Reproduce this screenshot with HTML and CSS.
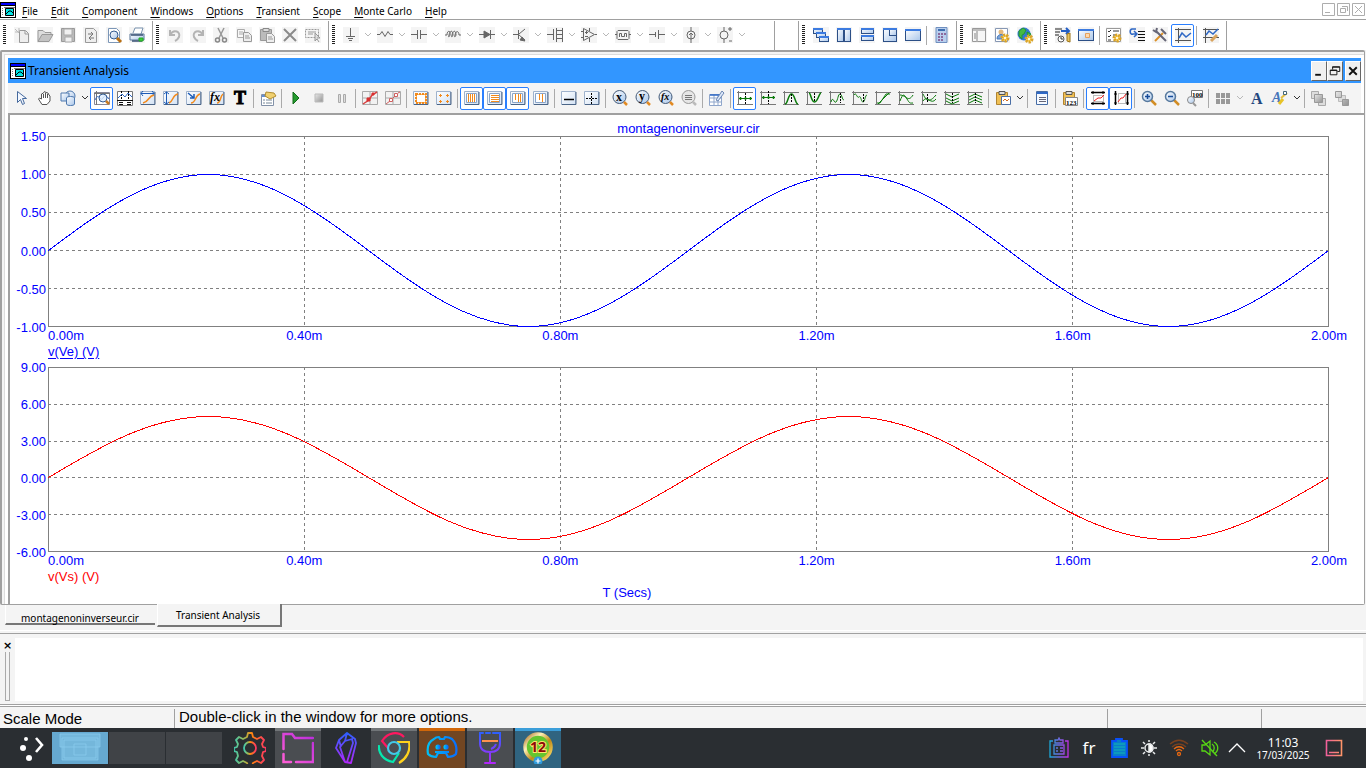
FILE: index.html
```html
<!DOCTYPE html>
<html lang="en">
<head>
<meta charset="utf-8">
<title>Transient Analysis</title>
<link rel="stylesheet" href="styles.css">
</head>
<body>
<nav class="menubar">
  <svg class="app-icon" viewBox="0 0 16 16" aria-hidden="true"><use href="#app"/></svg>
  <button><u>F</u>ile</button><button><u>E</u>dit</button><button><u>C</u>omponent</button><button><u>W</u>indows</button><button><u>O</u>ptions</button><button><u>T</u>ransient</button><button><u>S</u>cope</button><button><u>M</u>onte Carlo</button><button><u>H</u>elp</button>
  <span class="window-controls">
    <button aria-label="Minimize"><svg viewBox="0 0 13 13"><path d="M.5.5h12v12H.5zM3 9.500h5"/></svg></button>
    <button aria-label="Restore"><svg viewBox="0 0 13 13"><path d="M.5.5h12v12H.5zM3.500 5.500h5v4h-5zM5 3.500h5.500V8"/></svg></button>
    <button aria-label="Close"><svg viewBox="0 0 13 13"><path d="M.5.5h12v12H.5zM3 3l7 7M10 3l-7 7"/></svg></button>
  </span>
</nav>

<div class="toolbar main-toolbar" id="main-toolbar"></div>

<main class="mdi">
  <section class="child">
    <header class="titlebar">
      <svg class="app-icon" viewBox="0 0 16 16" aria-hidden="true"><use href="#app"/></svg>
      <h1>Transient Analysis</h1>
      <span class="title-controls">
        <button aria-label="Minimize window"><svg viewBox="0 0 14 19"><path d="M3 13.500h6" stroke-width="2"/></svg></button>
        <button aria-label="Restore window"><svg viewBox="0 0 14 19"><path d="M2 8.500h7v5H2zM4.500 8V5h7.500v5H9.500M4 5.500h8M2 9h7"/></svg></button>
        <button class="gap" aria-label="Close window"><svg viewBox="0 0 14 19"><path d="M3 5.500l8 8M11 5.500l-8 8" stroke-width="2"/></svg></button>
      </span>
    </header>
    <div class="toolbar child-toolbar" id="child-toolbar"></div>
  </section>

  <section class="chart">
    <h2>montagenoninverseur.cir</h2>
    <div class="plot upper">
      <div class="y-axis"><span>1.50</span><span>1.00</span><span>0.50</span><span>0.00</span><span>-0.50</span><span>-1.00</span></div>
      <svg viewBox="0 0 1281 191" preserveAspectRatio="none" role="img" aria-label="v(Ve)">
        <path class="grid" d="M0 38.500H1280M0 76.500H1280M0 114.500H1280M0 152.500H1280M256.500 0V190M512.500 0V190M768.500 0V190M1024.500 0V190"/>
        <rect class="frame" x=".5" y=".5" width="1280" height="190"/>
        <path class="wave ve" d="M.5 114.500c52-39 102-76 160-76s108 37 160 76s102 76 160 76s108-37 160-76s102-76 160-76s108 37 160 76s102 76 160 76s108-37 160-76"/>
      </svg>
    </div>
    <div class="x-axis"><span>0.00m</span><span>0.40m</span><span>0.80m</span><span>1.20m</span><span>1.60m</span><span>2.00m</span></div>
    <p class="series"><u>v(Ve) (V)</u></p>
    <div class="plot lower">
      <div class="y-axis"><span>9.00</span><span>6.00</span><span>3.00</span><span>0.00</span><span>-3.00</span><span>-6.00</span></div>
      <svg viewBox="0 0 1281 185" preserveAspectRatio="none" role="img" aria-label="v(Vs)">
        <path class="grid" d="M0 37.500H1280M0 74.500H1280M0 110.500H1280M0 147.500H1280M256.500 0V184M512.500 0V184M768.500 0V184M1024.500 0V184"/>
        <rect class="frame" x=".5" y=".5" width="1280" height="184"/>
        <path class="wave vs" d="M.5 110.500c52-31 102-61 160-61s108 30 160 61s102 62 160 62s108-31 160-62s102-61 160-61s108 30 160 61s102 62 160 62s108-31 160-62"/>
      </svg>
    </div>
    <div class="x-axis"><span>0.00m</span><span>0.40m</span><span>0.80m</span><span>1.20m</span><span>1.60m</span><span>2.00m</span></div>
    <p class="series red">v(Vs) (V)</p>
    <p class="x-title">T (Secs)</p>
  </section>
</main>

<nav class="tabs"><button class="tab">montagenoninverseur.cir</button><button class="tab selected">Transient Analysis</button></nav>

<section class="output" aria-label="Output">
  <div class="output-side"><button aria-label="Close output">×</button><i></i></div>
  <div class="output-body"></div>
</section>

<footer class="status"><span class="mode">Scale Mode</span><span class="hint">Double-click in the window for more options.</span><span class="cell"></span><span class="cell last"></span></footer>

<footer class="taskbar">
  <button class="launcher" aria-label="Applications"><svg viewBox="0 0 26 26"><g fill="#fff"><circle cx="7" cy="4" r="2"/><circle cx="4" cy="13" r="3"/><circle cx="10" cy="23" r="3"/></g><path d="M17 3l6 7-6 7" fill="none" stroke="#fff" stroke-width="2.600"/></svg></button>
  <div class="pager"><button class="current" aria-label="Desktop 1"><svg viewBox="0 0 56 32"><path d="M8 2h40v13H8zM10 6h36v22H10zM12 8h32v18H12zM22 12h12v11H22z" fill="#8ed0f2" fill-opacity=".35" stroke="#8ccdf0" stroke-opacity=".7"/></svg></button><button aria-label="Desktop 2"></button><button aria-label="Desktop 3"></button></div>
  <div class="apps">
    <button class="app" aria-label="Settings"><svg viewBox="0 0 32 32" fill="none" stroke="url(#rainbow)" stroke-width="1.800" stroke-linejoin="round"><path d="M14 1h4l1 4 4 2 4-2 3 3-2 4 1 3 3 1v3l-3 1-1 4 2 4-3 3-4-2-4 2-1 3h-4l-1-3-4-2-4 2-3-3 2-4-1-4-3-1v-3l3-1 1-3-2-4 3-3 4 2 4-2z"/><circle cx="16" cy="16" r="6"/></svg></button>
    <button class="app open" aria-label="Files"><svg viewBox="0 0 32 32" fill="none" stroke="url(#pink)" stroke-width="2.500"><path d="M1.500 17V2H10l3 4h18M31 11v19H14M1.500 22v8H9" stroke-linecap="round"/></svg></button>
    <button class="app" aria-label="Notes"><svg viewBox="0 0 32 32" fill="none" stroke="url(#violet)" stroke-width="1.800" stroke-linejoin="round"><path d="M17 1l8 6 1 4-5 20-6-1L6 16l3-8zM17 1l-2 8-5 6 5 15M9 8l2 7M15 9l7-2 1 4-6 19"/></svg></button>
    <button class="app open" aria-label="Browser"><svg viewBox="0 0 32 32" fill="none" stroke-width="2.200"><path d="M10 16L4 9C10 0 20-1 26 5" stroke="#ff1760"/><path d="M19 10h12c2 9-3 17-10 21" stroke="#ffd21c"/><path d="M1 13c-1 8 4 15 14 17l6-9" stroke="#06e7ae"/><circle cx="16" cy="16" r="6" stroke="#42c9e8"/></svg></button>
    <button class="app orange" aria-label="Chat"><svg viewBox="0 0 32 32" fill="none" stroke="url(#azure)" stroke-width="2.200" stroke-linejoin="round"><path d="M8 7c2-2 4-2 5-2l1 2h4l1-2c1 0 4 0 7 2 4 4 5 10 4 15-2 2-5 3-8 3l-2-4H12l-2 4c-3 0-6-1-8-3C1 16 2 10 8 7zM9 20h14"/><circle cx="12" cy="15" r="1.500" fill="#00a9f8"/><circle cx="20" cy="15" r="1.500" fill="#087ef7"/></svg></button>
    <button class="app open" aria-label="Wine"><svg viewBox="0 0 32 32" fill="none" stroke="url(#violet)" stroke-width="2"><path d="M9 1H6v10c0 6 4 9 10 9s10-3 10-9V1h-7M12 1h4M16 20v11M11 31h10" stroke-linecap="round"/><path d="M8 9h16" stroke="#ff914e"/><path d="M22 12c-1 3-2 4-5 5"/></svg></button>
    <button class="app blue" aria-label="Micro-Cap 12"><svg viewBox="0 0 32 32"><circle cx="16" cy="15" r="13" fill="#65c52f" stroke="url(#gold)" stroke-width="3.500"/><text x="16" y="20" class="twelve">12</text><circle cx="16" cy="29" r="4.500" fill="#2d9bdc"/><path d="M13.500 29h5M16 26.500v5" stroke="#fff" stroke-width="1.200"/></svg></button>
  </div>
  <div class="tray">
    <button aria-label="Clipboard"><svg viewBox="0 0 22 22" fill="none" stroke="url(#clip)" stroke-width="1.300"><path d="M5 4H2v16h18V4h-3M7 3h3l1-2 1 2h3v3H7zM6 8h10v9H6zM8 11h2M12 11h3M8 14h2M12 14h3"/></svg></button>
    <button class="lang">fr</button>
    <button aria-label="Battery"><svg viewBox="0 0 22 22"><path d="M4 4h4V2h6v2h5v16H4z" fill="#087ec8" stroke="#0850fa" stroke-width="1.800"/><path d="M6 7h11M6 10h11M6 13h11M6 16h11" stroke="#13b5b2"/></svg></button>
    <button aria-label="Brightness"><svg viewBox="0 0 22 22" fill="none" stroke="#e9ebec" stroke-width="1.500"><circle cx="11" cy="11" r="4"/><path d="M11 7v8c5 0 5-8 0-8z" fill="#fff"/><path d="M11 3v2M11 17v2M3 11h3M16 11h3M5 5l2 2M15 15l2 2M17 5l-2 2M7 15l-2 2"/></svg></button>
    <button aria-label="Network"><svg viewBox="0 0 22 22" fill="none" stroke="#e86812" stroke-width="1.300"><path d="M2 7c6-5 12-5 18 0M4 10c4-4 10-4 14 0" stroke="#78401f"/><path d="M6 12c3-3 7-3 10 0M8 14c2-2 4-2 6 0"/><circle cx="11" cy="17" r="1.500"/></svg></button>
    <button aria-label="Volume muted"><svg viewBox="0 0 22 22" fill="none" stroke="#58d815" stroke-width="1.300"><path d="M4 8h3l5-4v14l-5-4H4zM14 7c3 2 3 6 0 8M16 5c5 3 5 9 0 12"/><path d="M4 3l15 16"/></svg></button>
    <button class="more" aria-label="Show hidden icons"><svg viewBox="0 0 18 18" fill="none" stroke="#fff" stroke-width="1.300"><path d="M1 13l8-8 8 8"/></svg></button>
    <button class="clock"><time>11:03</time><span>17/03/2025</span></button>
    <button class="peek" aria-label="Show desktop"><svg viewBox="0 0 18 18" fill="none" stroke="url(#peek)" stroke-width="1.600"><path d="M1.500 1.500h15v15h-15zM4 13.500h10"/></svg></button>
  </div>
</footer>

<svg class="defs" aria-hidden="true">
  <defs>
    <symbol id="app" viewBox="0 0 16 16"><path d="M0 0h16v16H0z"/><path d="M1 1h14v2H1z" fill="#00f"/><path d="M1 4h14v11H1z" fill="#fff"/><path d="M2 6h1v1H2zM2 8h1v1H2zM2 10h1v1H2zM2 12h1v1H2zM4 5h11v1H4z" fill="#777"/><path d="M5.500 6.500h8v7h-8z" fill="#00e5e5" stroke="#000"/><path d="M6 12l3-3h2l3 3" fill="none" stroke="#000"/></symbol>
    <linearGradient id="rainbow"><stop stop-color="#3fc9b0"/><stop offset=".35" stop-color="#a5b74c"/><stop offset=".55" stop-color="#ff850f"/><stop offset="1" stop-color="#ff3565"/></linearGradient>
    <linearGradient id="pink" x1="0" y1="1" x2="1" y2="0"><stop stop-color="#ff5ed6"/><stop offset="1" stop-color="#b92cdc"/></linearGradient>
    <linearGradient id="violet" gradientUnits="userSpaceOnUse" x1="16" y1="0" x2="16" y2="32"><stop stop-color="#2a61ff"/><stop offset="1" stop-color="#b526fa"/></linearGradient>
    <linearGradient id="azure"><stop stop-color="#00c0f4"/><stop offset="1" stop-color="#0870ff"/></linearGradient>
    <linearGradient id="gold" x1="0" y1="0" x2="1" y2="1"><stop stop-color="#a56b22"/><stop offset=".3" stop-color="#fff0b8"/><stop offset=".6" stop-color="#c08b18"/><stop offset="1" stop-color="#ffe36f"/></linearGradient>
    <linearGradient id="clip"><stop stop-color="#1ba7d8"/><stop offset="1" stop-color="#c32ee8"/></linearGradient>
    <linearGradient id="peek"><stop stop-color="#f0609a"/><stop offset="1" stop-color="#ff9469"/></linearGradient>
    <linearGradient id="glass" x1="0" y1="0" x2="1" y2="1"><stop stop-color="#fff"/><stop offset="1" stop-color="#a9c6ea"/></linearGradient>
    <linearGradient id="pane" x1="0" y1="0" x2="1" y2="1"><stop stop-color="#fff"/><stop offset="1" stop-color="#d3e2f4"/></linearGradient>
    <linearGradient id="greys" x1="0" y1="0" x2="1" y2="1"><stop stop-color="#e8e8e8"/><stop offset="1" stop-color="#929292"/></linearGradient>
  </defs>
</svg>
<script src="toolbars.js"></script>
</body>
</html>
```

FILE: styles.css
```css
* { box-sizing: border-box; }
body {
  margin: 0;
  min-height: 100vh;
  display: flex;
  flex-direction: column;
  background: #f4f4f4;
  color: #000;
  font: 10px/16px "Noto Sans", "Open Sans", sans-serif;
}
button { margin: 0; padding: 0; border: 0; background: none; color: inherit; font: inherit; }
h1, h2, p { margin: 0; font-weight: normal; }
svg { display: block; }
.defs { position: absolute; width: 0; height: 0; }
.app-icon { width: 16px; height: 16px; flex: none; }

.menubar { display: flex; align-items: center; height: 20px; background: #fff; border-bottom: 1px solid #a0a0a0; }
.menubar > button { margin-left: 6px; margin-right: 7px; padding-top: 3px; }
.menubar u { text-underline-offset: 2px; }
.window-controls { display: flex; gap: 2px; margin-left: auto; margin-right: 1px; }
.window-controls svg { width: 13px; height: 13px; fill: none; stroke: #adadad; }

.toolbar { display: flex; }
.main-toolbar { height: 30px; background: #fff; }
.group { display: flex; align-items: center; padding: 0 4px 1px 10px; border-right: 1px solid #a0a0a0; margin-top: 1px; }
.group.wide { padding-right: 27px; }
.group.empty { width: 24px; padding: 0; }
.grip { width: 3px; height: 20px; margin: 0 4px 0 -7px; background: repeating-linear-gradient(#222 0 1px, #fff 1px 2px); }
.tool { width: 23px; height: 23px; display: grid; place-items: center; flex: none; border: 1px solid transparent; border-radius: 2px; }
.tool.active { border-color: #2a7fff; background: #fff; }
.tool svg { width: 16px; height: 16px; overflow: visible; }
.main-toolbar .tool svg { background: #f4f4f4; }
.drop { width: 11px; height: 23px; display: grid; place-items: center; flex: none; }
.drop svg { width: 8px; height: 8px; fill: none; stroke: #333; }
.drop.off svg { stroke: #b8b8b8; }
.sep { width: 1px; height: 19px; margin: 0 2px; background: #aaa; flex: none; }

.mdi { flex: 1; display: flex; flex-direction: column; margin-right: 1px; background: #fff; border: 1px solid #a0a0a0; border-top-width: 2px; border-left-width: 2px; border-radius: 2px; box-shadow: inset 3px 3px 0 -1px #f4f4f4, inset 4px 4px 0 -1px #dcdcdc; }
.child { margin: 6px 3px 0 6px; background: #f4f4f4; }
.titlebar { display: flex; align-items: center; height: 25px; padding-left: 2px; background: #3296ff; }
.titlebar h1 { margin-left: 2px; font-size: 12px; line-height: 20px; }
.title-controls { display: flex; margin-left: auto; }
.title-controls button { width: 16px; height: 20px; background: #f0f0f0; border: 1px solid; border-color: #fff #666 #666 #fff; }
.title-controls .gap { margin-left: 2px; }
.title-controls svg { width: 14px; height: 18px; fill: none; stroke: #111; }
.child-toolbar { height: 30px; padding-left: 2px; align-items: center; }

.chart { flex: 1; display: flex; flex-direction: column; margin-left: 6px; padding: 5px 35px 3px 0; border: solid #a0a0a0; border-width: 2px 0 0 2px; background: #fff; color: #00f; font: 13px/16px "Liberation Sans", Arial, sans-serif; }
.chart h2 { padding: 2px 0 0 38px; font-size: 13px; line-height: 14px; text-align: center; }
.plot { display: grid; grid-template-columns: 38px 1fr; min-height: 0; }
.plot.upper { flex: 191 191 191px; }
.plot.lower { flex: 185 185 185px; margin-top: 7px; }
.plot svg { width: 100%; height: 100%; min-height: 0; shape-rendering: crispEdges; fill: none; }
.plot svg > * { vector-effect: non-scaling-stroke; }
.grid { stroke: #808080; stroke-dasharray: 3 3; }
.frame { stroke: #808080; }
.ve { stroke: #00f; }
.vs { stroke: #f00; }
.y-axis { display: flex; flex-direction: column; justify-content: space-between; align-items: flex-end; margin: -7px 2px -8px 0; }
.x-axis { display: flex; justify-content: space-between; margin-left: 38px; padding-top: 1px; }
.x-axis span { width: 0; display: flex; justify-content: center; }
.x-axis span:first-child { justify-content: flex-start; }
.series { margin-left: 38px; }
.series u { text-underline-offset: 2px; }
.red { color: #f00; }
.x-title { text-align: center; padding-right: 85px; }
.y-axis span { height: 15px; line-height: 15px; }

.tabs { display: flex; align-items: flex-start; height: 26px; padding-left: 5px; border-bottom: 1px solid #fff; }
.tab { padding: 5px 16px 0 15px; height: 20px; line-height: 16px; border-bottom: 2px solid #777; border-left: 1px solid #fff; }
.tab.selected { height: 23px; margin: -1px 0 0 2px; padding: 3px 20px 2px 18px; background: #f4f4f4; border-right: 2px solid #777; z-index: 1; }

.output { display: flex; margin-top: 2px; height: 71px; border-top: 1px solid #a0a0a0; padding: 4px 3px 3px 0; }
.output-side { width: 15px; display: flex; flex-direction: column; align-items: center; }
.output-side button { height: 14px; font: bold 11px/11px "DejaVu Sans", sans-serif; }
.output-side i { flex: 1; width: 5px; border: 1px solid #aaa; border-top: 0; }
.output-body { flex: 1; background: #fff; }

.status { display: flex; height: 24px; padding-top: 2px; border-top: 1px solid #a0a0a0; box-shadow: inset 0 1px #fff, inset 0 2px #a0a0a0; font: 15px/20px "Liberation Sans", Arial, sans-serif; }
.mode { width: 174px; padding: 2px 0 0 3px; }
.hint { flex: 1; padding-left: 4px; border-left: 1px solid #a0a0a0; margin-top: 2px; line-height: 16px; }
.cell { width: 154px; border-left: 1px solid #a0a0a0; margin-top: 2px; }
.cell.last { width: 105px; }

.taskbar { display: flex; align-items: center; height: 40px; background: #2a2e32; color: #fff; }
.launcher { margin: 0 7px 0 19px; }
.launcher svg { width: 26px; height: 26px; }
.pager { display: flex; gap: 1px; }
.pager button { width: 56px; height: 32px; background: #404347; }
.pager .current { background: #66a9d0; }
.apps { display: flex; gap: 2px; margin-left: 5px; }
.app { width: 46px; height: 40px; display: grid; place-items: center; }
.app svg { width: 32px; height: 32px; }
.app.open { background: #4a4d51; box-shadow: inset 0 3px #717578; }
.app.orange { background: #724622; box-shadow: inset 0 3px #d0670a; }
.app.blue { background: #306480; box-shadow: inset 0 3px #3b9ed9; }
.twelve { font: bold 14px "Open Sans", sans-serif; text-anchor: middle; fill: #8e0808; stroke: #ffe36f; stroke-width: 2px; paint-order: stroke; }
.tray { display: flex; align-items: center; margin-left: auto; padding-right: 23px; }
.tray > button { width: 30px; display: grid; place-items: center; }
.tray svg { width: 22px; height: 22px; }
.tray .lang { font-size: 17px; line-height: 24px; }
.tray .more { width: 26px; }
.tray .more svg, .tray .peek svg { width: 18px; height: 18px; }
.tray .clock { width: 66px; font-size: 10px; line-height: 10px; }
.clock time { font-size: 12px; line-height: 14px; }
.tray .peek { width: 18px; margin-left: 9px; }
```

FILE: toolbars.js
```js
// 16x16 icon helpers
const p = (d, stroke, fill = 'none', w = 1) => `<path d="${d}" stroke="${stroke}" fill="${fill}" stroke-width="${w}"/>`;
const box = (inner) => p('M.5 1.500h14v13H.5z', '#9fb2cc', 'url(#pane)') + p('M1 14.500h14V2', '#4a6486') + inner;
const framed = (inner) => box(p('M2.500 3.500h10v9h-10z', '#8aa5c8', '#fff') + inner);
const win = (x, y, w, h) => `<rect x="${x}.5" y="${y}.5" width="${w}" height="${h}" fill="url(#glass)" stroke="#2c4f86"/><path d="M${x} ${y + 1}h${w + 1}" stroke="#3c7be0" stroke-width="2"/>`;
const label = (t, x, y, size, fill = '#000', extra = '') => `<text x="${x}" y="${y}" font-family="Liberation Serif" font-weight="bold" font-size="${size}" fill="${fill}" ${extra}>${t}</text>`;
const lens = (inner, c = '#435a78') => `<circle cx="7.500" cy="7" r="6.500" fill="url(#glass)" stroke="${c}"/>${p('M12 12l3 3', '#e28a23', 'none', 2.500)}${inner}`;
const axes = (inner) => p('M1.500 1v14M0 2.500h16M0 14.500h16', '#777') + inner;
const dashed = (d, s = '#000', w = 1) => `<path d="${d}" stroke="${s}" stroke-width="${w}" fill="none" stroke-dasharray="2 1"/>`;
const glass = (inner) => p('M10 10l5 5', '#d28d25', 'none', 2.500) + `<circle cx="6.500" cy="6.500" r="5" fill="url(#glass)" stroke="#57799e" stroke-width="1.500"/>` + inner;
const gear = (x, y) => `<circle cx="${x}" cy="${y}" r="3" fill="#ffd65a" stroke="#d9a32a" stroke-width="3" stroke-dasharray="2 1"/><circle cx="${x}" cy="${y}" r="1" fill="#fff"/>`;
const board = p('M1.500 2.500h11v12h-11z', '#b08432', '#f0c055') + p('M4 1.500h6v3H4z', '#555', '#ddd');
const g = '#666', n = '#0a7a0a', o = '#f28a1c', b = '#2f68c5';

const icons = {
  new: p('M5.500 3.500h6l3 3v9h-9zM11 4v3h3', '#999', '#eee') + p('M1 2l4 4M5 1v4M1 5h4', '#bbb'),
  open: p('M1 14.500V3.500h5l2 2h6v3', '#999', '#ddd') + p('M1 14.500l4-7h11l-4 7z', '#999', '#c4c4c4'),
  save: p('M1.500 1.500h13v13h-13z', '#999', '#bbb') + p('M4 2h8v6H4zM5 10h7v5H5z', '#aaa', '#f0f0f0'),
  reload: p('M2.500 1.500h8l3 3v11h-11z', '#999', '#eee') + p('M5 7h5M8 5l2 2-2 2M11 11H6M8 9l-2 2 2 2', '#777'),
  preview: p('M2.500 1.500h8l3 3v11h-11z', '#7c97b8', '#fff') + `<circle cx="8" cy="8" r="4" fill="url(#glass)" stroke="#345b91"/>` + p('M11 11l4 4', '#b86f13', 'none', 3),
  print: p('M4 6l2-5h8l-2 6', '#7892ae', '#fff') + p('M1 7h14v6H1z', '#607c9e', 'url(#glass)') + p('M2 8h12M3 14h10', '#3a5274', 'none', 1.5) + p('M10 11h4v3h-4z', '#28a329', '#3bd138'),
  undo: p('M3 3v5h5M3 8c4-7 11-3 9 2-1 2-2 3-4 4', '#b4b4b4', 'none', 2),
  redo: p('M13 3v5H8M13 8C9 1 2 5 4 10c1 2 2 3 4 4', '#b4b4b4', 'none', 2),
  cut: p('M5 1l5 10M11 1L6 11', '#999', 'none', 1.5) + `<circle cx="4.500" cy="13" r="2" fill="none" stroke="#888" stroke-width="1.500"/><circle cx="11.500" cy="13" r="2" fill="none" stroke="#888" stroke-width="1.500"/>`,
  copy: p('M1.500 2.500h7v8h-7zM3 5h4M3 7h4', '#aaa', '#f8f8f8') + p('M7.500 5.500h5l3 3v6h-8zM9 9h4M9 11h5', '#999', '#eee'),
  paste: p('M1.500 2.500h11v11h-11z', '#999', '#bbb') + p('M4 1.500h6v3H4z', '#888', '#ddd') + p('M7.500 6.500h5l3 3v6h-8zM9 10h4M9 12h5', '#999', '#eee'),
  del: p('M2 2l12 12M14 2L2 14', '#8b8b8b', 'none', 2),
  select: dashed('M.5 2.500h13v8H.5z', '#999') + p('M3 5h8M3 7h5M10 6v8l2-2 2 3M10 6l5 5h-3', '#999', '#ddd'),
  ground: p('M7.500 1v8M3 9.500h9M5 11.500h5M6 13.500h3', g),
  resistor: p('M0 7.500h3l2-3 3 5 3-5 2 3h3', g),
  capacitor: p('M0 7.500h6M10 7.500h6M6.500 3v9M9.500 3v9', g),
  inductor: p('M0 8h2c0-5 4-5 3 0-1 3-2 2-1 0 1-5 4-5 4 0-1 3-2 2-1 0 1-5 4-5 4 0-1 3-2 2-1 0 1-5 4-4 4 0h2', g),
  diode: p('M0 7.500h16M11.500 3v9', g) + p('M5 4v7l6-3.500z', g, g),
  bjt: p('M0 7.500h5M5.500 3v9M6 7l6-5M6 8l6 5', g) + p('M12 14l-3-4-2 3z', g, g),
  mosfet: p('M0 7.500h6M6.500 2v11M9.500 1v14M10 3.500h6M10 7.500h6M10 11.500h6M15.500 1v14', g),
  opamp: p('M2.500 1.500v12l11-6zM0 4.500h2M0 10.500h2M14 7.500h2M8.500 1v3M8.500 11v4M4 5.500h3M5.500 4v3M4 9.500h3', g),
  pulse: p('M3 3.500h10l1 1v7l-1 1H3l-1-1v-7zM0 7.500h2M14 7.500h2M4.500 10V6.500h2v3h3v-3h2V10', g),
  battery: p('M0 7.500h6M10 7.500h6M6.500 5v5M9.500 3v9', g),
  isource: `<circle cx="8" cy="8" r="4" fill="none" stroke="#666"/>` + p('M8 0v4M8 6v10M6 8l2-2 2 2', g),
  vsource: `<circle cx="7" cy="8" r="4" fill="none" stroke="#666"/>` + p('M7 0v4M7 12v4M11 2h4M13 0v4M12 14h3', g),
  cascade: win(0, 1, 9, 5) + win(3, 5, 9, 5) + win(6, 9, 9, 5),
  tileV: win(1, 1, 6, 13) + win(8, 1, 6, 13),
  tileH: win(2, 1, 12, 5) + win(2, 8, 12, 5),
  overlap: win(1, 1, 13, 13) + win(7, 1, 7, 7),
  maximize: win(0, 2, 15, 11),
  calc: p('M3 .5h11v15H3z', '#6f8fbf', '#b9cfee') + p('M5 3h7', '#3f6fb0', 'none', 2) + p('M5 7h2M8 7h2M11 7h2M5 10h2M8 10h2M5 13h2M8 13h2', '#8d6a9c', 'none', 2),
  panel: p('M1.500 1.500h13v13h-13z', '#999', '#f6f6f6') + p('M2 3h12M6 4v11M3 7h2M3 9h2M3 11h2', '#aaa', 'none', 1.5),
  user: p('M1.500 1.500h12v13h-12z', '#8798b4', '#fff') + `<circle cx="7" cy="5" r="2.500" fill="#e4b97d"/>` + p('M3 12c0-6 8-6 8 0z', '#4679bc', '#7ea5d8') + gear(11, 11),
  globe: `<circle cx="7" cy="7" r="6.500" fill="#3478d3"/>` + p('M2 4l4-3 3 2-2 4-2 1v4L2 9zM10 5l4 2-3 4z', '#239738', '#46b943') + gear(12, 12),
  stepTime: p('M0 2h7M0 5h5M0 8h4', '#222') + p('M6 4h7M11 1l3 3-3 3', '#235ec4', 'none', 2) + p('M12 7l3-1v9l-3-1z', '#a0771a', '#e9c45e') + `<circle cx="6" cy="12" r="3" fill="#fff" stroke="#555"/>` + p('M6 10v2h2', '#333'),
  window: win(0, 2, 15, 11) + p('M7.500 6.500h4v4h-4z', '#e3a05f', '#ffd9ab'),
  prefs: p('M.5 1.500h14v13H.5z', '#999', '#fff') + p('M2 4l1 1 2-2M7 4h6M2 9l1 1 2-2M7 8h4M2 13h3', '#333') + gear(11, 11),
  back: p('M7 2H3c-3 1-2 6 1 5h3M5 4l3 3-3 3', b, 'none', 1.5) + p('M9 4.500h7M9 7.500h7M9 10.500h7M9 13.500h7', '#111'),
  tools: p('M3 14l8-8', '#db9028', 'none', 2) + p('M4 4l10 10M1 3l3 2 1-4M9 2l5 5', '#667', 'none', 2),
  graph: p('M3.500 1v15M0 2.500h16M0 13.500h16', '#555') + p('M4 11l3-5 4 4 5-4', b, 'none', 1.5),
  graphEdit: p('M2.500 1v15M0 2.500h16M0 10.500h16', '#555') + p('M3 8l3-4 4 3 5-5', b, 'none', 1.5) + p('M8 14l6-6', '#d9a45e', 'none', 3),
  pointer: p('M3.500 1.500v11l3-3 2 5 2-1-2-5h4z', '#45699d', '#f4f8ff'),
  hand: p('M5 14.500L1.500 9l1-1 2 1V4l2-1 1-1.500 1.500 1 2 .5 1 2 1 1v5l-3 3.500z', '#555', '#fff') + p('M6.500 4v4M8.500 3v5M10.500 4v4', '#555'),
  shapes: `<circle cx="10" cy="6" r="5" fill="url(#glass)" stroke="#4f79ae"/>` + p('M1 3h8v8H1z', '#4f79ae', 'url(#glass)') + p('M6.500 8c0-2 8-2 8 0v6c0 2-8 2-8 0z', '#4f79ae', 'url(#glass)'),
  scale: p('M.5 2.500h15v12H.5z', '#889', '#fff') + p('M0 3.500h16M2.500 1v14', '#777') + p('M1 10c4-9 5 3 8-2 2-4 4-2 6 1', b) + `<circle cx="9" cy="8" r="4" fill="#dfeeff" fill-opacity=".8" stroke="#345b91"/>` + p('M12 11l3 3', '#c97c24', 'none', 2.500),
  cursor: p('M.5 1.500h15v14H.5z', '#777', '#fff') + dashed('M4.500 1v9M11.500 1v9') + p('M0 10.500h16M2 12.500h4M10 12.500h4M2 14.500h4M10 14.500h4', '#111') + p('M1 8l4-4 3 3 3-4 4 4', b),
  hTag: box(p('M1 3.500h13M3 1L1 3.500 3 6M12 1l2 2.500L12 6', '#1d5bb5') + p('M3 13c6-1 5-7 11-8', o, 'none', 1.5)),
  vTag: box(p('M3.500 2v12M1 4l2.500-2L6 4M1 12l2.500 2L6 12', '#1d5bb5') + p('M6 13c5-2 3-8 9-9', o, 'none', 1.5)),
  pTag: box(p('M2 3l6 5M8 4v4H4', '#1d5bb5', 'none', 1.5) + p('M5 13c5 0 4-8 9-9', o, 'none', 1.5)),
  fxTag: box(p('M8 13c4 0 3-7 6-9', o, 'none', 1.5) + label('fx', 1, 11, 12, '#000', 'font-style="italic"')),
  text: label('T', 2, 14, 18, '#000', 'stroke="#000"'),
  props: p('M1.500 4.500h12v11h-12z', '#8291a8', '#fff') + p('M2 6h11', b, 'none', 1.5) + p('M3 10h2M6 10h6M3 13h2M6 13h6', '#789') + p('M6 2l8 1 2 3-6 3-5-3z', '#b18c2e', '#f0d070'),
  run: p('M5 2v12l6-6z', '#126b18', '#249a2e'),
  stop: p('M4 4h8v8H4z', '#bbb', 'url(#greys)'),
  pause: p('M4.500 4.500h2v8h-2zM9.500 4.500h2v8h-2z', '#aaa', '#ddd'),
  tokens: p('M.5 1.500h15v13H.5zM8 1v14M0 8h16', '#aaa', '#f2f2f2') + p('M1 14l6-4 3-5 5-3', '#d84040', 'none', 1.5) + p('M5 8h3v3H5zM10 3h2v2h-2z', '#d83030', '#d83030'),
  tokensOpen: p('M.5 1.500h15v13H.5zM8 1v14M0 8h16', '#aaa', '#f2f2f2') + p('M1 14l4-3M8 8l2-2M13 3l2-1M4.500 8.500h3v3h-3zM9.500 3.500h3v3h-3z', '#d06060', '#fff'),
  rulers: box(p('M3.500 4.500h9v8h-9z', '#ffb35c', '#fff', 1) + dashed('M3 4h10v9H3z', o, 2)),
  dots: box(p('M3 5.500h3M10 5.500h3M3 11.500h3M10 11.500h3M4.500 4v3M11.500 4v3M4.500 10v3M11.500 10v3', o)),
  vBars: framed(p('M4.500 4v8M6.500 4v8M8.500 4v8M10.500 4v8', o)),
  hBars: framed(p('M4 5.500h8M4 7.500h8M4 9.500h8M4 11.500h8', o)),
  threeBars: framed(p('M5.500 4v6M8.500 4v8M10.500 4v8', o)),
  twoBars: framed(p('M6.500 4v6M9.500 4v8', o)),
  baseline: box(p('M3 9.500h10', '#000', 'none', 1.5)),
  cross: box(dashed('M7.500 3v11M2 8.500h12')),
  lensX: lens(label('x', 4, 11, 12)),
  lensY: lens(label('y', 4, 10, 12)),
  lensFx: lens(label('fx', 3, 10, 10, '#000', 'font-style="italic"')),
  lensList: lens(p('M4 5.500h7M4 7.500h7M4 9.500h7', '#777'), '#999').replace('#e28a23', '#bbb').replace('url(#glass)', '#e6e6e6'),
  sheet: p('M.5 4.500h12v11H.5zM1 8h11M1 12h11M5 5v10M9 5v10', '#8fa6cb', '#fff') + p('M1 5h12', b, 'none', 1.5) + p('M7 10l6-9 2 2-6 8z', '#6c87b3', '#dce8fa'),
  next: axes(p('M2 8.500h13', n) + dashed('M8.500 3v12') + p('M3 7.500h1v2H3zM8 7.500h1v2H8zM13 7.500h1v2h-1z', n, n)),
  nextWide: axes(p('M2 7.500h13', n) + dashed('M8.500 1v13') + p('M3 6.500h1v2H3zM8 6.500h1v2H8zM13 6.500h1v2h-1z', n, n)),
  peak: axes(p('M2 14c3 0 3-10 6.500-10S12 14 15 14', n, 'none', 1.5) + dashed('M8.500 4v9')),
  valley: axes(p('M3 3c2 0 2 9 5.500 9S13 3 15 3', n, 'none', 1.5) + dashed('M8.500 3v9')),
  high: axes(p('M2 12c2-7 3 2 5 0s2-8 4-8 2 6 4 6', n) + dashed('M11.500 3v10')),
  low: axes(p('M2 5c2-4 3 4 5 2s2 5 4 5 2-7 4-7', n) + dashed('M11.500 4v9')),
  inflect: axes(p('M2 13h3l6-9h4', n) + p('M3 14L14 3', n)),
  globalHigh: axes(p('M2 11c3-8 4-7 7-2s3 4 6 4M2 5c6 0 8 8 13 0', n)),
  globalLow: axes(p('M2 4c4 9 8 7 13 1M2 11c4-7 8 5 13-2', n) + dashed('M6.500 4v9')),
  topWave: axes(p('M2 4l6 3 7-3M2 8l6 3 7-3M2 11l6 3 7-3', n) + dashed('M8.500 3v10')),
  botWave: axes(p('M2 7l6-3 7 3M2 10l6-3 7 3M2 13l6-3 7 3', n) + dashed('M8.500 3v10')),
  pasteWave: board + p('M6.500 6.500h9v8h-9z', '#4b6fa5', '#fff') + p('M8 11l2-2 2 2 2-2', '#d36b20'),
  list: p('M2.500 1.500h11v13h-11z', '#466ca5', '#f5f9ff') + p('M3 3h11', b, 'none', 2) + p('M5 7.500h7M5 9.500h7M5 11.500h7', '#667'),
  paste123: board + p('M3.500 7.500h12v8h-12z', '#888', '#fff') + label('123', 4, 15, 7),
  limitsX: p('M1 2.500h14M1 13.500h14', '#000', 'none', 1.5) + p('M3.500 5v7M13.500 5v7M4 5.500h9M4 11.500h9', '#bbb') + p('M3 1v3M13 1v3M3 12v3M13 12v3', '#000') + p('M4 11l4-3h3l3-3', '#e22'),
  limitsY: p('M2.500 1v14M14.500 1v14', '#000', 'none', 1.5) + p('M5 3.500h7M5 13.500h7M5.500 3v11M12.500 3v11', '#bbb') + p('M1 4h3M13 4h3M1 13h3M13 13h3', '#000') + p('M5 12l3-4h2l3-4', '#e22'),
  zoomIn: glass(p('M4 6.500h5M6.500 4v5', '#174c99', 'none', 1.5)),
  zoomOut: glass(p('M4 6.500h5', '#174c99', 'none', 1.5)),
  zoom100: p('M4.500 .5h11v7h-11z', '#777', '#fff') + label('100', 5, 7, 7) + `<circle cx="4" cy="10" r="3.500" fill="url(#glass)" stroke="#888"/>` + p('M6 13l3 3', '#999', 'none', 2),
  gridCells: p('M1 3h4v5H1zM6 3h4v5H6zM11 3h4v5h-4zM1 9h4v5H1zM6 9h4v5H6zM11 9h4v5h-4z', 'none', '#999'),
  font: label('A', 2, 14, 16, '#23477e'),
  fontStyle: label('A', 0, 12, 14, '#4675b9', 'font-style="italic"') + p('M9 8l6-5', '#e3bc41', 'none', 2) + p('M11.500 1.500h3v3h-3z', '#467', '#fff') + p('M7 14l4-5', '#e8c327', 'none', 3),
  toFront: p('M.5 1.500h7v7h-7z', '#aaa', '#ddd') + p('M7.500 8.500h7v7h-7z', '#aaa', '#ddd') + p('M3.500 4.500h8v8h-8z', '#999', 'url(#greys)'),
  toBack: p('M4.500 5.500h7v6h-7z', '#bbb', '#ddd') + p('M1.500 1.500h6v6h-6zM8.500 9.500h6v6h-6z', '#999', 'url(#greys)'),
};

// "|" separator, "*" pressed, "v" enabled drop-down, "-" disabled drop-down
function build(spec) {
  return spec.split(' ').map((token) => {
    if (token === '|') return '<span class="sep"></span>';
    if (token === 'v' || token === '-') return `<button class="drop${token === '-' ? ' off' : ''}" aria-label="More"><svg viewBox="0 0 8 8"><path d="M1 2l3 3 3-3"/></svg></button>`;
    const name = token.replace('*', '');
    return `<button class="tool${token.endsWith('*') ? ' active' : ''}" aria-label="${name}"><svg viewBox="0 0 16 16">${icons[name]}</svg></button>`;
  }).join('');
}

const groups = [
  ['', 'new open save reload preview print'],
  ['', 'undo redo cut copy paste del select'],
  ['wide', 'ground - resistor - capacitor - inductor - diode - bjt - mosfet - opamp - pulse - battery - isource - vsource -'],
  ['empty', ''],
  ['', 'cascade tileV tileH overlap maximize | calc'],
  ['', 'panel user globe'],
  ['', 'stepTime window | prefs back tools graph* | graphEdit'],
];
document.getElementById('main-toolbar').innerHTML = groups.map(([cls, spec]) =>
  `<div class="group ${cls}">${spec ? '<span class="grip"></span>' + build(spec) : ''}</div>`).join('');
document.getElementById('child-toolbar').innerHTML = build(
  'pointer hand shapes v scale* cursor hTag vTag pTag fxTag text | props | run stop pause | tokens tokensOpen | rulers dots | ' +
  'vBars* hBars* threeBars* twoBars | baseline cross | lensX lensY lensFx lensList | sheet | ' +
  'next* nextWide peak valley high low inflect globalHigh globalLow topWave botWave | pasteWave v | list | paste123 | ' +
  'limitsX* limitsY* | zoomIn zoomOut zoom100 | gridCells - font fontStyle v | toFront toBack');
```
